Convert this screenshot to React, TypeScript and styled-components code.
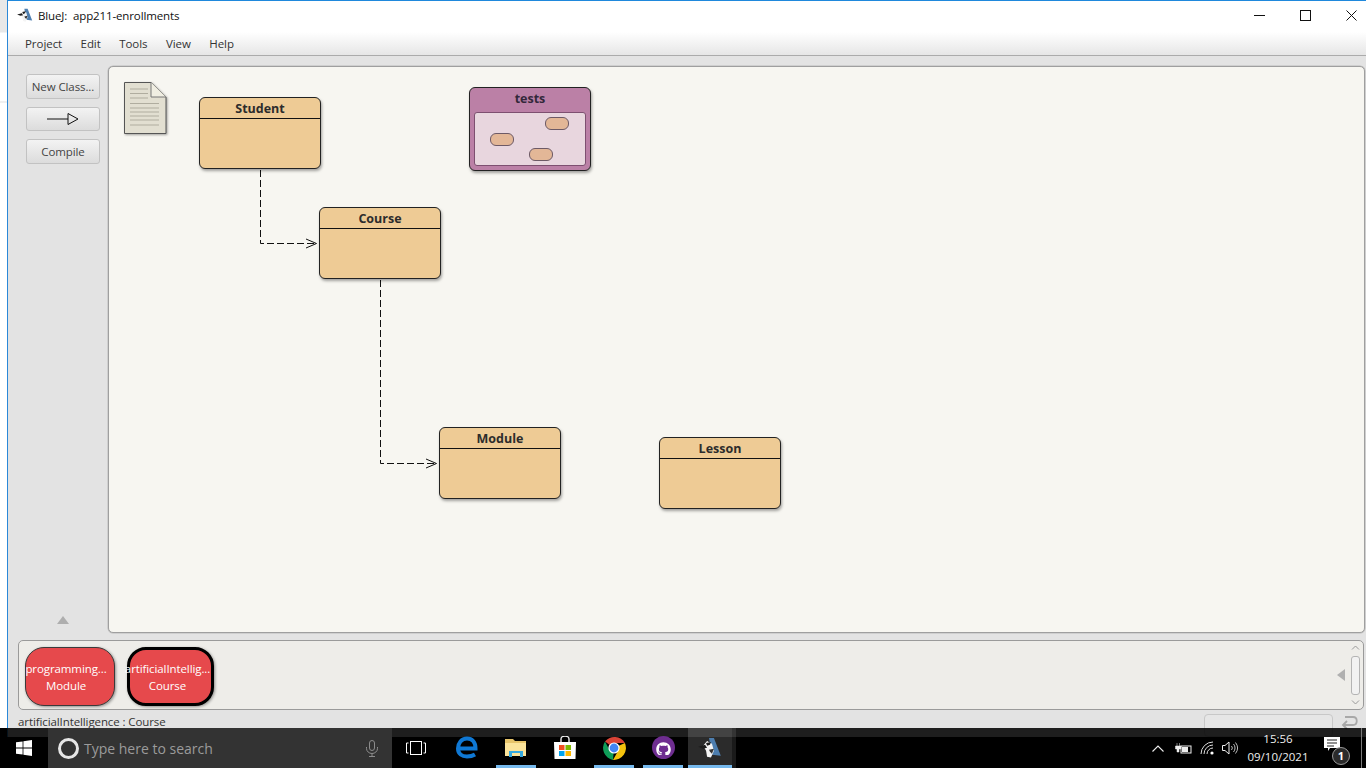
import React from "react";
import styled, { createGlobalStyle } from "styled-components";
import { FaGithub } from "react-icons/fa";

const GlobalStyle = createGlobalStyle`
  html, body {
    margin: 0;
    padding: 0;
    height: 768px;
    overflow: hidden;
    background: #000;
    font-family: "Open Sans", "Liberation Sans", sans-serif;
  }
  * { box-sizing: border-box; }
`;

const Desktop = styled.div`
  width: 1366px;
  height: 768px;
  position: relative;
  display: flex;
  align-items: flex-start;
  overflow: hidden;
`;

const Strip = styled.div`
  width: 7px;
  height: 728px;
  flex-shrink: 0;
  background: linear-gradient(180deg, #e8e8e8 0, #e8e8e8 32px, #fff 33px, #fff 101px, #e0e0e0 102px, #fff 103px);
`;

const Window = styled.div`
  width: 1359px;
  height: 737px;
  display: flex;
  flex-direction: column;
  background: #e3e3e3;
  border-left: 1px solid #2b88d8;
  border-top: 1px solid #1f88dc;
`;

const TitleBar = styled.div`
  height: 31px;
  flex-shrink: 0;
  background: #fff;
  display: flex;
  align-items: center;
  padding: 0 0 2px 9px;
`;

const TitleText = styled.span`
  margin-left: 5px;
  font-size: 11.5px;
  letter-spacing: -0.12px;
  color: #111;
  white-space: pre;
`;

const WindowControls = styled.div`
  margin-left: auto;
  margin-right: -8px;
  display: flex;
  align-items: center;
`;

const WindowButton = styled.div`
  width: 46px;
  height: 30px;
  display: flex;
  align-items: center;
  justify-content: center;
`;

const MenuBar = styled.div`
  height: 24px;
  flex-shrink: 0;
  display: flex;
  align-items: center;
  gap: 18.4px;
  padding-left: 17px;
  background: linear-gradient(180deg, #fff 0%, #e6e6e6 100%);
  border-bottom: 1px solid #ababab;
`;

const MenuItem = styled.span`
  font-size: 11.5px;
  letter-spacing: -0.05px;
  color: #333;
`;

const Main = styled.div`
  flex: 1;
  display: flex;
  flex-direction: column;
  min-height: 0;
`;

const Upper = styled.div`
  height: 578px;
  flex-shrink: 0;
  display: flex;
  padding-top: 10px;
`;

const Sidebar = styled.div`
  width: 100px;
  flex-shrink: 0;
  display: flex;
  flex-direction: column;
  align-items: flex-start;
  padding: 8px 0 10px 18px;
`;

const ToolButton = styled.div<{ $short?: boolean }>`
  width: 74px;
  height: ${(p) => (p.$short ? 24 : 25)}px;
  margin-bottom: 8px;
  border: 1px solid #c2c2c2;
  border-radius: 3px;
  background: linear-gradient(180deg, #f3f3f3 0%, #dcdcdc 100%);
  display: flex;
  align-items: center;
  justify-content: center;
  font-size: 11.5px;
  letter-spacing: -0.1px;
  color: #444;
`;

const UpTriangle = styled.div`
  margin: auto 0 0 31px;
  width: 0;
  height: 0;
  border-left: 6px solid transparent;
  border-right: 6px solid transparent;
  border-bottom: 8px solid #aeaeae;
`;

const Canvas = styled.div`
  position: relative;
  width: 1257px;
  height: 567px;
  background: #f7f6f1;
  border: 1px solid #9f9f9f;
  border-radius: 5px;
  box-shadow: 0 0 0 0.5px #bbb;
`;

const EdgeLayer = styled.svg`
  position: absolute;
  left: 0;
  top: 0;
  pointer-events: none;
`;

const ClassNode = styled.div<{ $x: number; $y: number }>`
  position: absolute;
  left: ${(p) => p.$x}px;
  top: ${(p) => p.$y}px;
  width: 122px;
  height: 72px;
  background: #eecb95;
  border: 1px solid #222;
  border-radius: 6px;
  box-shadow: 1px 2px 3px rgba(0, 0, 0, 0.35);
`;

const ClassTitle = styled.div`
  height: 21px;
  border-bottom: 1px solid #111;
  text-align: center;
  font-size: 12.5px;
  line-height: 22px;
  font-weight: 700;
  color: #2c2c2c;
`;

const PackageNode = styled.div<{ $x: number; $y: number }>`
  position: absolute;
  left: ${(p) => p.$x}px;
  top: ${(p) => p.$y}px;
  width: 122px;
  height: 84px;
  background: #bb80a6;
  border: 1px solid #222;
  border-radius: 6px;
  box-shadow: 1px 2px 3px rgba(0, 0, 0, 0.35);
  padding: 0 4px 4px;
`;

const PackageTitle = styled.div`
  height: 24px;
  text-align: center;
  font-size: 12.5px;
  line-height: 21px;
  font-weight: 700;
  color: #33283a;
`;

const PackageBody = styled.div`
  position: relative;
  height: 54px;
  background: #e8d6de;
  border: 1px solid #7d4f70;
  border-radius: 3px;
`;

const MiniClass = styled.div<{ $x: number; $y: number }>`
  position: absolute;
  left: ${(p) => p.$x}px;
  top: ${(p) => p.$y}px;
  width: 24px;
  height: 13px;
  background: #e3b797;
  border: 1px solid #6d5a66;
  border-radius: 6px;
`;

const NoteIcon = styled.svg`
  position: absolute;
  left: 15px;
  top: 15px;
  filter: drop-shadow(1px 1px 1px rgba(0, 0, 0, 0.35));
`;

const Bench = styled.div`
  position: relative;
  margin: 6px 0 0 10px;
  width: 1346px;
  height: 70px;
  flex-shrink: 0;
  background: #eeede9;
  border: 1px solid #9a9a9a;
  border-radius: 5px;
  display: flex;
  align-items: flex-start;
  padding: 6px 0 0 6px;
  gap: 12px;
`;

const BenchObject = styled.div<{ $selected?: boolean }>`
  width: ${(p) => (p.$selected ? 87 : 90)}px;
  height: 59px;
  padding-right: ${(p) => (p.$selected ? 6 : 8)}px;
  border-radius: 19px;
  background: #e6494c;
  border: ${(p) => (p.$selected ? "3px solid #000" : "1px solid #3a3a3a")};
  box-shadow: 1px 1px 3px rgba(0, 0, 0, 0.4);
  color: #fff;
  font-size: 11.5px;
  letter-spacing: -0.1px;
  line-height: 17px;
  display: flex;
  flex-direction: column;
  align-items: center;
  justify-content: center;
  white-space: nowrap;
`;

const BenchScroll = styled.div`
  margin-left: auto;
  margin-top: -6px;
  display: flex;
  align-items: center;
  height: 68px;
  gap: 5px;
  padding-right: 3px;
`;

const LeftTriangle = styled.div`
  width: 0;
  height: 0;
  border-top: 6px solid transparent;
  border-bottom: 6px solid transparent;
  border-right: 8px solid #b0b0b0;
`;

const ScrollTrack = styled.div`
  width: 10px;
  height: 100%;
  display: flex;
  flex-direction: column;
  align-items: center;
  justify-content: space-between;
  padding: 4px 0;
`;

const ScrollThumb = styled.div`
  width: 9px;
  height: 39px;
  border: 1px solid #b4b4b4;
  border-radius: 3px;
  background: #f2f2f2;
`;

const StatusRow = styled.div`
  height: 27px;
  flex-shrink: 0;
  display: flex;
  align-items: flex-start;
  padding: 4px 0 0 10px;
  font-size: 11.5px;
  letter-spacing: -0.1px;
  color: #333;
`;

const StatusInput = styled.div`
  margin-left: auto;
  width: 129px;
  height: 23px;
  border: 1px solid #c8c8c8;
  border-radius: 4px;
  background: #e6e6e6;
`;

const UndoSlot = styled.div`
  width: 33px;
  display: flex;
  justify-content: center;
  padding-top: 1px;
`;

const Taskbar = styled.div`
  position: absolute;
  left: 0;
  bottom: 0;
  width: 1366px;
  height: 40px;
  background: rgba(0, 0, 0, 0.87);
  display: flex;
  align-items: center;
  color: #fff;
`;

const StartButton = styled.div`
  width: 48px;
  height: 40px;
  display: flex;
  align-items: center;
  justify-content: center;
`;

const SearchBox = styled.div`
  width: 344px;
  height: 40px;
  background: #333;
  display: flex;
  align-items: center;
  padding-left: 10px;
  color: #9b9b9b;
  font-size: 14px;
`;

const SearchRing = styled.div`
  width: 21px;
  height: 21px;
  border: 3px solid #e6e6e6;
  border-radius: 50%;
  margin-right: 5px;
`;

const MicSlot = styled.div`
  margin-left: auto;
  margin-right: 14px;
  display: flex;
`;

const TaskIcon = styled.div<{ $w: number; $running?: boolean; $active?: boolean }>`
  position: relative;
  width: ${(p) => p.$w}px;
  height: 40px;
  display: flex;
  align-items: center;
  justify-content: center;
  background: ${(p) => (p.$active ? "rgba(255,255,255,0.17)" : "transparent")};
  border-bottom: 3px solid ${(p) => (p.$running ? "#76b9ed" : "transparent")};
  padding-top: 2px;
`;

const Spacer = styled.div<{ $w: number; $lit?: boolean }>`
  width: ${(p) => p.$w}px;
  height: 40px;
  flex-shrink: 0;
  background: ${(p) => (p.$lit ? "rgba(255,255,255,0.1)" : "transparent")};
`;

const Tray = styled.div`
  margin-left: auto;
  display: flex;
  align-items: center;
  height: 40px;
`;

const TraySlot = styled.div<{ $w: number }>`
  width: ${(p) => p.$w}px;
  display: flex;
  justify-content: center;
`;

const Clock = styled.div`
  width: 72px;
  text-align: center;
  font-size: 11.5px;
  line-height: 18px;
  color: #eee;
`;

const NotifySlot = styled.div`
  position: relative;
  width: 43px;
  height: 40px;
  display: flex;
  align-items: center;
  justify-content: center;
`;

const NotifyIcon = styled.svg`
  margin: -8px 0 0 -16px;
`;

const NotifyBadge = styled.div`
  position: absolute;
  left: 14px;
  top: 19px;
  width: 18px;
  height: 18px;
  border-radius: 50%;
  background: #2b2b2b;
  border: 1px solid #999;
  font-size: 11px;
  font-weight: 700;
  line-height: 16px;
  text-align: center;
  color: #fff;
`;

const ShowDesktop = styled.div`
  width: 5px;
  height: 40px;
  border-left: 1px solid #7a7a7a;
`;

function BlueJBird({ size = 16 }: { size?: number }) {
  return (
    <svg width={size} height={size * 0.9} viewBox="0 0 24 22">
      <path d="M11 1 L16 1 L23 19 L14 18 Z" fill="#4d7eaf" />
      <path d="M5 9 L9 4 L14 7 L16 14 L13 21 L9 20 L8 14 Z" fill="#f4f4f4" />
      <path d="M0 10 L7 8 L9 11 L5 12 Z" fill="#1c1c1c" />
      <path d="M8 6 L13 5 L12 8 L9 9 Z" fill="#1c1c1c" />
      <path d="M11 13 L16 12 L14 17 L12 15 Z" fill="#333" />
    </svg>
  );
}

function ChromeLogo() {
  return (
    <svg width="24" height="24" viewBox="0 0 24 24">
      <path d="M12 12 L3 5.5 A12 12 0 0 1 22.9 7 L12 7 Z" fill="#db4437" />
      <path d="M12 12 L22.9 7 A12 12 0 0 1 11 23.9 L16 15 Z" fill="#f4c20d" />
      <path d="M12 12 L11 23.9 A12 12 0 0 1 3 5.5 L8 15 Z" fill="#0f9d58" />
      <circle cx="12" cy="12" r="5.6" fill="#fff" />
      <circle cx="12" cy="12" r="4.4" fill="#4285f4" />
    </svg>
  );
}

function EdgeLogo() {
  return (
    <svg width="22" height="23" viewBox="0 0 22 23">
      <path
        d="M3 12.5H19.5C19.5 6 16 2.5 11 2.5C5.5 2.5 2 7 2 12.5C2 18 6 20.5 11 20.5C14 20.5 16.5 20 19 18.5"
        fill="none"
        stroke="#0f78d4"
        strokeWidth="4"
      />
    </svg>
  );
}

function FolderLogo() {
  return (
    <svg width="22" height="20" viewBox="0 0 22 20">
      <path d="M0 1 H8 L10 3 H21 V18 H0 Z" fill="#e7c46a" />
      <path d="M0 5 H21 V18 H0 Z" fill="#fbe39a" />
      <path d="M4 13 H18 V19 H15 V15 H7 V19 H4 Z" fill="#35a9e0" />
    </svg>
  );
}

function StoreLogo() {
  return (
    <svg width="24" height="24" viewBox="0 0 24 24">
      <path d="M8 6 V3 A4 3 0 0 1 16 3 V6" fill="none" stroke="#eee" strokeWidth="1.4" />
      <path d="M1 6 H23 L22.5 23 H1.5 Z" fill="#fff" />
      <rect x="6" y="9" width="5.5" height="5" fill="#f25022" />
      <rect x="12.5" y="9" width="5.5" height="5" fill="#7fba00" />
      <rect x="6" y="15" width="5.5" height="5" fill="#00a4ef" />
      <rect x="12.5" y="15" width="5.5" height="5" fill="#ffb900" />
    </svg>
  );
}

export default function App() {
  return (
    <Desktop>
      <GlobalStyle />
      <Strip />
      <Window>
        <TitleBar>
          <BlueJBird />
          <TitleText>{"BlueJ:  app211-enrollments"}</TitleText>
          <WindowControls>
            <WindowButton>
              <svg width="11" height="11" viewBox="0 0 11 11"><path d="M0 5.5H11" stroke="#111" /></svg>
            </WindowButton>
            <WindowButton>
              <svg width="11" height="11" viewBox="0 0 11 11"><rect x="0.5" y="0.5" width="10" height="10" fill="none" stroke="#111" /></svg>
            </WindowButton>
            <WindowButton>
              <svg width="11" height="11" viewBox="0 0 11 11"><path d="M0.5 0.5L10.5 10.5M10.5 0.5L0.5 10.5" stroke="#111" /></svg>
            </WindowButton>
          </WindowControls>
        </TitleBar>
        <MenuBar>
          <MenuItem>Project</MenuItem>
          <MenuItem>Edit</MenuItem>
          <MenuItem>Tools</MenuItem>
          <MenuItem>View</MenuItem>
          <MenuItem>Help</MenuItem>
        </MenuBar>
        <Main>
          <Upper>
            <Sidebar>
              <ToolButton>New Class...</ToolButton>
              <ToolButton $short>
                <svg width="32" height="14" viewBox="0 0 32 14">
                  <path d="M0 7H21" stroke="#111" fill="none" />
                  <path d="M21 1.5L31 7L21 12.5Z" stroke="#111" fill="none" />
                </svg>
              </ToolButton>
              <ToolButton>Compile</ToolButton>
              <UpTriangle />
            </Sidebar>
            <Canvas>
              <EdgeLayer width="1255" height="565" viewBox="109 67 1255 565">
                <g fill="none" stroke="#111" strokeWidth="1">
                  <path d="M260.5 170V243.5H316" strokeDasharray="7 3" />
                  <path d="M306 239L316.5 243.5L306 248" />
                  <path d="M380.5 280V463.5H436" strokeDasharray="7 3" />
                  <path d="M426 459L436.5 463.5L426 468" />
                </g>
              </EdgeLayer>
              <NoteIcon width="43" height="53" viewBox="0 0 43 53">
                <path d="M0.5 0.5H27L42 15V51.5H0.5Z" fill="#e2dfd1" stroke="#555" />
                <path d="M27 0.5V15H42" fill="#f0eee2" stroke="#777" />
                <g stroke="#b0ad9f">
                  <path d="M6 7H24M6 11.5H24M6 16H24M6 21.5H35M6 26H35M6 30H35M6 34H35M6 38H35M6 43H35" />
                </g>
              </NoteIcon>
              <ClassNode $x={90} $y={30}><ClassTitle>Student</ClassTitle></ClassNode>
              <ClassNode $x={210} $y={140}><ClassTitle>Course</ClassTitle></ClassNode>
              <ClassNode $x={330} $y={360}><ClassTitle>Module</ClassTitle></ClassNode>
              <ClassNode $x={550} $y={370}><ClassTitle>Lesson</ClassTitle></ClassNode>
              <PackageNode $x={360} $y={20}>
                <PackageTitle>tests</PackageTitle>
                <PackageBody>
                  <MiniClass $x={70} $y={4} />
                  <MiniClass $x={15} $y={20} />
                  <MiniClass $x={54} $y={35} />
                </PackageBody>
              </PackageNode>
            </Canvas>
          </Upper>
          <Bench>
            <BenchObject>
              <span>programming...</span>
              <span>Module</span>
            </BenchObject>
            <BenchObject $selected>
              <span>artificialIntellig...</span>
              <span>Course</span>
            </BenchObject>
            <BenchScroll>
              <LeftTriangle />
              <ScrollTrack>
                <svg width="9" height="5" viewBox="0 0 9 5"><path d="M1 4.5L4.5 1L8 4.5" fill="none" stroke="#999" /></svg>
                <ScrollThumb />
                <svg width="9" height="5" viewBox="0 0 9 5"><path d="M1 0.5L4.5 4L8 0.5" fill="none" stroke="#999" /></svg>
              </ScrollTrack>
            </BenchScroll>
          </Bench>
          <StatusRow>
            <span>artificialIntelligence : Course</span>
            <StatusInput />
            <UndoSlot>
              <svg width="17" height="17" viewBox="0 0 17 17">
                <path d="M4 2H12C17 2 17 10 12 10H2" fill="none" stroke="#a8a8a8" strokeWidth="1.8" />
                <path d="M6 6L2 10L6 14" fill="none" stroke="#a8a8a8" strokeWidth="1.8" />
              </svg>
            </UndoSlot>
          </StatusRow>
        </Main>
      </Window>
      <Taskbar>
        <StartButton>
          <svg width="16" height="16" viewBox="0 0 16 16">
            <path d="M0 2.3L6.6 1.4V7.6H0ZM7.4 1.3L16 0V7.6H7.4ZM0 8.4H6.6V14.6L0 13.7ZM7.4 8.4H16V16L7.4 14.7Z" fill="#fff" />
          </svg>
        </StartButton>
        <SearchBox>
          <SearchRing />
          Type here to search
          <MicSlot>
            <svg width="12" height="17" viewBox="0 0 12 17">
              <rect x="3.5" y="0.5" width="5" height="10" rx="2.5" fill="none" stroke="#8c8c8c" />
              <path d="M0.5 7V8.5A5.5 5 0 0 0 11.5 8.5V7M6 13.5V16M3 16.5H9" fill="none" stroke="#8c8c8c" />
            </svg>
          </MicSlot>
        </SearchBox>
        <TaskIcon $w={48}>
          <svg width="20" height="14" viewBox="0 0 20 14">
            <rect x="4.5" y="0.5" width="11" height="13" fill="none" stroke="#fff" />
            <path d="M2.5 2H0.5V12H2.5M17.5 2H19.5V12H17.5" fill="none" stroke="#fff" />
          </svg>
        </TaskIcon>
        <TaskIcon $w={54}><EdgeLogo /></TaskIcon>
        <Spacer $w={2} />
        <TaskIcon $w={40} $running><FolderLogo /></TaskIcon>
        <Spacer $w={8} />
        <TaskIcon $w={42}><StoreLogo /></TaskIcon>
        <Spacer $w={8} />
        <TaskIcon $w={40} $running><ChromeLogo /></TaskIcon>
        <Spacer $w={9} />
        <TaskIcon $w={40} $running>
          <svg width="23" height="23" viewBox="0 0 23 23">
            <circle cx="11.5" cy="11.5" r="11.5" fill="#6e2d90" />
            <foreignObject x="4" y="4" width="15" height="15">
              <FaGithub size={15} color="#fff" />
            </foreignObject>
          </svg>
        </TaskIcon>
        <Spacer $w={5} />
        <TaskIcon $w={44} $running $active><BlueJBird size={24} /></TaskIcon>
        <Spacer $w={4} $lit />
        <Tray>
          <TraySlot $w={24}>
            <svg width="12" height="7" viewBox="0 0 12 7"><path d="M0.5 6.5L6 1L11.5 6.5" fill="none" stroke="#eee" strokeWidth="1.1" /></svg>
          </TraySlot>
          <TraySlot $w={26}>
            <svg width="17" height="11" viewBox="0 0 17 11">
              <rect x="6" y="3" width="10" height="7" fill="none" stroke="#eee" />
              <rect x="7" y="4" width="6" height="5" fill="#eee" />
              <path d="M2 0V3M4.5 0V3M0.5 3H6V6H4V9H2V6H0.5Z" fill="#eee" stroke="#eee" strokeWidth="0.5" />
            </svg>
          </TraySlot>
          <TraySlot $w={22}>
            <svg width="15" height="14" viewBox="0 0 15 14">
              <g fill="none" stroke="#ddd">
                <path d="M1 13A12 12 0 0 1 13 1" />
                <path d="M4 13A9 9 0 0 1 13 4" />
                <path d="M7 13A6 6 0 0 1 13 7" />
              </g>
              <circle cx="12" cy="12" r="1.6" fill="#fff" />
            </svg>
          </TraySlot>
          <TraySlot $w={24}>
            <svg width="16" height="14" viewBox="0 0 16 14">
              <path d="M0.5 4.5H3L7 1V13L3 9.5H0.5Z" fill="none" stroke="#eee" />
              <path d="M9.5 5A3 3 0 0 1 9.5 9M11.5 3A6 6 0 0 1 11.5 11M13.5 1.5A9 9 0 0 1 13.5 12.5" fill="none" stroke="#bbb" />
            </svg>
          </TraySlot>
          <Clock>
            15:56
            <br />
            09/10/2021
          </Clock>
          <Spacer $w={4} />
          <NotifySlot>
            <NotifyIcon width="16" height="14" viewBox="0 0 16 14">
              <path d="M0 0H16V11H6L4 14V11H0Z" fill="#fff" />
              <path d="M3 3H13M3 6H13M3 9H10" stroke="#222" />
            </NotifyIcon>
            <NotifyBadge>1</NotifyBadge>
          </NotifySlot>
          <ShowDesktop />
        </Tray>
      </Taskbar>
    </Desktop>
  );
}
